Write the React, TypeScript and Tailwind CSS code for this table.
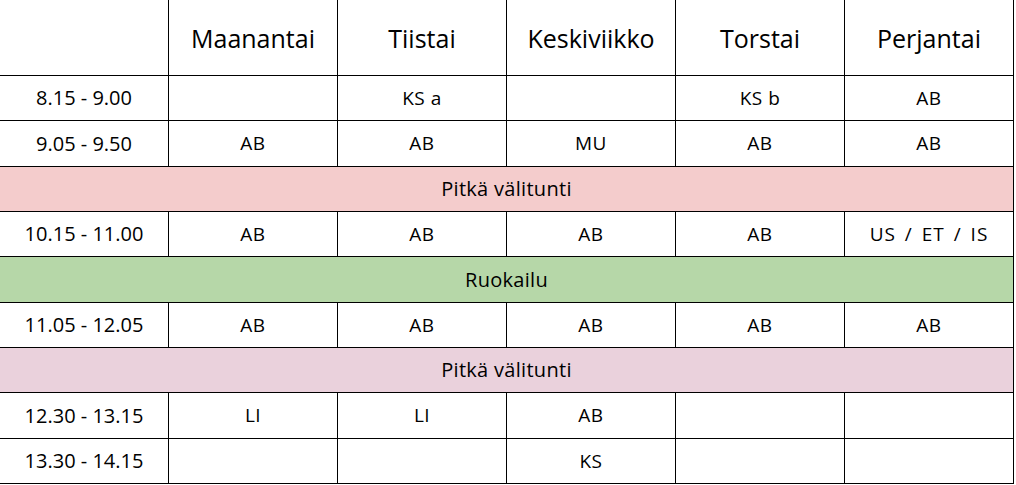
const days = ["Maanantai", "Tiistai", "Keskiviikko", "Torstai", "Perjantai"];

type Row =
  | { kind: "lesson"; time: string; cells: string[]; h: string }
  | { kind: "break"; label: string; bg: string; h: string };

const rows: Row[] = [
  { kind: "lesson", time: "8.15 - 9.00", cells: ["", "KS a", "", "KS b", "AB"], h: "h-[45px]" },
  { kind: "lesson", time: "9.05 - 9.50", cells: ["AB", "AB", "MU", "AB", "AB"], h: "h-[46px]" },
  { kind: "break", label: "Pitkä välitunti", bg: "bg-[#f4cccc]", h: "h-[45px]" },
  { kind: "lesson", time: "10.15 - 11.00", cells: ["AB", "AB", "AB", "AB", "US / ET / IS"], h: "h-[45px]" },
  { kind: "break", label: "Ruokailu", bg: "bg-[#b6d7a8]", h: "h-[46px]" },
  { kind: "lesson", time: "11.05 - 12.05", cells: ["AB", "AB", "AB", "AB", "AB"], h: "h-[45px]" },
  { kind: "break", label: "Pitkä välitunti", bg: "bg-[#ead1dc]", h: "h-[45px]" },
  { kind: "lesson", time: "12.30 - 13.15", cells: ["LI", "LI", "AB", "", ""], h: "h-[46px]" },
  { kind: "lesson", time: "13.30 - 14.15", cells: ["", "", "KS", "", ""], h: "h-[45px]" },
];

// Comic Sans isn't installed, Open Sans is the nearest rounded face we have
const font = { fontFamily: '"Open Sans", sans-serif' };

export default function App() {
  return (
    <div style={font} className="w-[1016px] h-[485px] bg-white text-black">
      <div className="grid grid-cols-[repeat(6,169px)]">
        {/* header */}
        <div className="h-[76px] border-r border-b border-black" />
        {days.map((d) => (
          <div
            key={d}
            className="h-[76px] border-r border-b border-black flex items-center justify-center text-[25px] pt-[2px]"
          >
            {d}
          </div>
        ))}

        {rows.map((r, i) =>
          r.kind === "break" ? (
            <div
              key={i}
              className={`col-span-6 ${r.h} ${r.bg} border-r border-b border-black flex items-center justify-center text-[20px] tracking-[0.3px]`}
            >
              {r.label}
            </div>
          ) : (
            <div key={i} className="contents">
              <div
                className={`${r.h} border-r border-b border-black flex items-center justify-center text-[20px]`}
              >
                {r.time}
              </div>
              {r.cells.map((c, j) => (
                <div
                  key={j}
                  className={`${r.h} border-r border-b border-black flex items-center justify-center text-[19px] ${
                    c.includes("/") ? "tracking-[1px] [word-spacing:3px]" : "tracking-[0.5px]"
                  }`}
                >
                  {c}
                </div>
              ))}
            </div>
          )
        )}
      </div>
    </div>
  );
}
